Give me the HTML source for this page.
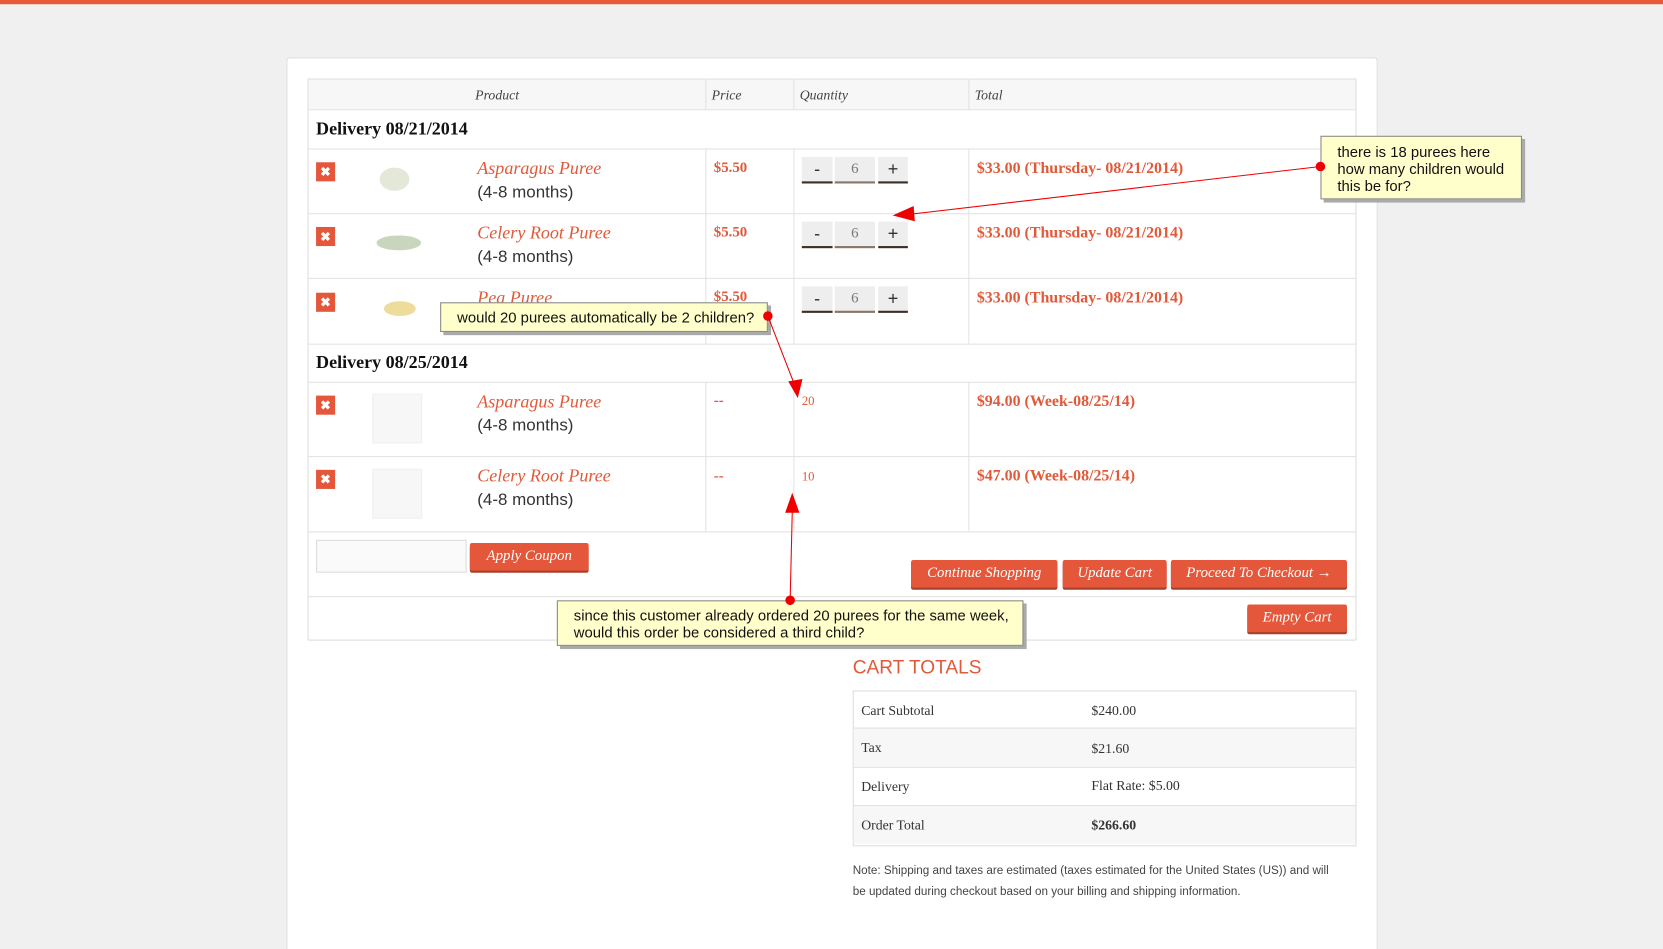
<!DOCTYPE html>
<html><head><meta charset="utf-8"><style>
*{margin:0;padding:0;box-sizing:border-box}
html,body{width:1663px;height:949px;overflow:hidden;background:#efefef}
#w{position:absolute;left:0;top:0;width:1568px;height:895px;transform:scale(1.0606);transform-origin:0 0;background:#f0f0f0;font-family:"Liberation Serif",serif;overflow:hidden}
.a{position:absolute}
.sans{font-family:"Liberation Sans",sans-serif}
.red{color:#e05a3a}
.hl{position:absolute;height:1px;background:#e2e2e2}
.vl{position:absolute;width:1px;background:#e2e2e2}
.x{position:absolute;width:18px;height:18px;background:#e5573a;color:#fff;font:bold 12px/18px "Liberation Sans",sans-serif;text-align:center}
.nm{position:absolute;left:450px;font:italic 17px "Liberation Serif",serif;color:#e05a3a}
.mo{position:absolute;left:450px;font:16px "Liberation Sans",sans-serif;color:#333}
.pr{position:absolute;left:673px;font:bold 14px "Liberation Serif",serif;color:#e05a3a}
.tt{position:absolute;left:921px;font:bold 15px "Liberation Serif",serif;color:#e05a3a}
.qb{position:absolute;height:25px;background:#eee;border-bottom:2px solid #3a302a;text-align:center;font:17px/23px "Liberation Sans",sans-serif;color:#333}
.btn{position:absolute;background:#e5573a;color:#fff;font:italic 14px/26px "Liberation Serif",serif;text-align:center;border-radius:2px;box-shadow:0 2px 0 #a8412b}
.note{position:absolute;background:#ffffcc;border:1px solid #888;box-shadow:3px 3px 0 #aaa;font:14px/16px "Liberation Sans",sans-serif;color:#111}
.img{position:absolute;width:47px;height:47px;background:#f7f7f7;border:1px solid #f0f0f0}
</style></head><body><div id="w">
<div class="a" style="left:0;top:0;width:1568px;height:4px;background:#e8593a"></div>
<div class="a" style="left:270px;top:54px;width:1029px;height:841px;background:#fff;border:1px solid #ddd;border-bottom:none;border-radius:3px 3px 0 0"></div>
<div class="a" style="left:290px;top:74px;width:989px;height:530px;border:1px solid #ddd"></div>
<div class="a" style="left:291px;top:75px;width:987px;height:28px;background:#f7f7f7"></div>
<div class="hl" style="left:290px;top:103px;width:989px"></div>
<div class="hl" style="left:290px;top:140px;width:989px"></div>
<div class="hl" style="left:290px;top:201px;width:989px"></div>
<div class="hl" style="left:290px;top:262px;width:989px"></div>
<div class="hl" style="left:290px;top:324px;width:989px"></div>
<div class="hl" style="left:290px;top:360px;width:989px"></div>
<div class="hl" style="left:290px;top:430px;width:989px"></div>
<div class="hl" style="left:290px;top:501px;width:989px"></div>
<div class="hl" style="left:290px;top:562px;width:989px"></div>
<div class="vl" style="left:665px;top:74px;height:29px"></div><div class="vl" style="left:748px;top:74px;height:29px"></div><div class="vl" style="left:913px;top:74px;height:29px"></div>
<div class="vl" style="left:665px;top:140px;height:184px"></div><div class="vl" style="left:748px;top:140px;height:184px"></div><div class="vl" style="left:913px;top:140px;height:184px"></div>
<div class="vl" style="left:665px;top:360px;height:141px"></div><div class="vl" style="left:748px;top:360px;height:141px"></div><div class="vl" style="left:913px;top:360px;height:141px"></div>
<div class="a" style="left:448px;top:82px;font:italic 13px 'Liberation Serif',serif;color:#444">Product</div>
<div class="a" style="left:671px;top:82px;font:italic 13px 'Liberation Serif',serif;color:#444">Price</div>
<div class="a" style="left:754px;top:82px;font:italic 13px 'Liberation Serif',serif;color:#444">Quantity</div>
<div class="a" style="left:919px;top:82px;font:italic 13px 'Liberation Serif',serif;color:#444">Total</div>
<div class="a" style="left:298px;top:112px;font:bold 17px 'Liberation Serif',serif;color:#111">Delivery 08/21/2014</div>
<div class="a" style="left:298px;top:332px;font:bold 17px 'Liberation Serif',serif;color:#111">Delivery 08/25/2014</div>
<div class="x" style="left:298px;top:153px">✖</div>
<div class="x" style="left:298px;top:214px">✖</div>
<div class="x" style="left:298px;top:276px">✖</div>
<div class="x" style="left:298px;top:373px">✖</div>
<div class="x" style="left:298px;top:443px">✖</div>
<div class="a" style="left:358px;top:158px;width:28px;height:22px;border-radius:50%;background:#e4e8d8"></div>
<div class="a" style="left:355px;top:222px;width:42px;height:14px;border-radius:50%;background:#c9d6bd"></div>
<div class="a" style="left:362px;top:284px;width:30px;height:14px;border-radius:50%;background:#eedc9a"></div>
<div class="img" style="left:351px;top:371px"></div>
<div class="img" style="left:351px;top:442px"></div>
<div class="nm" style="top:149px">Asparagus Puree</div><div class="mo" style="top:173px">(4-8 months)</div>
<div class="nm" style="top:210px">Celery Root Puree</div><div class="mo" style="top:234px">(4-8 months)</div>
<div class="nm" style="top:271px">Pea Puree</div>
<div class="nm" style="top:369px">Asparagus Puree</div><div class="mo" style="top:393px">(4-8 months)</div>
<div class="nm" style="top:439px">Celery Root Puree</div><div class="mo" style="top:463px">(4-8 months)</div>
<div class="pr" style="top:151px">$5.50</div><div class="pr" style="top:212px">$5.50</div><div class="pr" style="top:273px">$5.50</div>
<div class="pr" style="top:371px">--</div><div class="pr" style="top:442px">--</div>
<div class="qb" style="left:756px;top:148px;width:29px">-</div><div class="qb" style="left:787px;top:148px;width:38px;font:14px/23px 'Liberation Serif',serif;color:#777;border-bottom-color:#8a7664">6</div><div class="qb" style="left:828px;top:148px;width:28px">+</div>
<div class="qb" style="left:756px;top:209px;width:29px">-</div><div class="qb" style="left:787px;top:209px;width:38px;font:14px/23px 'Liberation Serif',serif;color:#777;border-bottom-color:#8a7664">6</div><div class="qb" style="left:828px;top:209px;width:28px">+</div>
<div class="qb" style="left:756px;top:270px;width:29px">-</div><div class="qb" style="left:787px;top:270px;width:38px;font:14px/23px 'Liberation Serif',serif;color:#777;border-bottom-color:#8a7664">6</div><div class="qb" style="left:828px;top:270px;width:28px">+</div>
<div class="a red" style="left:756px;top:371px;font:12px 'Liberation Serif',serif">20</div>
<div class="a red" style="left:756px;top:442px;font:12px 'Liberation Serif',serif">10</div>
<div class="tt" style="top:151px">$33.00 (Thursday- 08/21/2014)</div>
<div class="tt" style="top:212px">$33.00 (Thursday- 08/21/2014)</div>
<div class="tt" style="top:273px">$33.00 (Thursday- 08/21/2014)</div>
<div class="tt" style="top:371px">$94.00 (Week-08/25/14)</div>
<div class="tt" style="top:441px">$47.00 (Week-08/25/14)</div>
<div class="a" style="left:298px;top:509px;width:142px;height:31px;border:1px solid #ddd;background:#fafafa"></div>
<div class="btn" style="left:443px;top:512px;width:112px">Apply Coupon</div>
<div class="btn" style="left:859px;top:528px;width:138px">Continue Shopping</div>
<div class="btn" style="left:1002px;top:528px;width:98px">Update Cart</div>
<div class="btn" style="left:1104px;top:528px;width:166px">Proceed To Checkout →</div>
<div class="btn" style="left:1176px;top:570px;width:94px">Empty Cart</div>
<div class="a sans red" style="left:804px;top:619px;font-size:18px">CART TOTALS</div>
<div class="a" style="left:804px;top:651px;width:475px;height:147px;border:1px solid #ddd"></div>
<div class="a" style="left:805px;top:687px;width:473px;height:36px;background:#f7f7f7"></div>
<div class="a" style="left:805px;top:760px;width:473px;height:36px;background:#f7f7f7"></div>
<div class="hl" style="left:804px;top:686px;width:475px"></div><div class="hl" style="left:804px;top:723px;width:475px"></div><div class="hl" style="left:804px;top:759px;width:475px"></div>
<div class="a" style="left:812px;top:662px;font-size:13px;color:#333">Cart Subtotal</div><div class="a" style="left:1029px;top:662px;font-size:13px;color:#333">$240.00</div>
<div class="a" style="left:812px;top:697px;font-size:13px;color:#333">Tax</div><div class="a" style="left:1029px;top:698px;font-size:13px;color:#333">$21.60</div>
<div class="a" style="left:812px;top:734px;font-size:13px;color:#333">Delivery</div><div class="a" style="left:1029px;top:733px;font-size:13px;color:#333">Flat Rate: $5.00</div>
<div class="a" style="left:812px;top:770px;font-size:13px;color:#333">Order Total</div><div class="a" style="left:1029px;top:770px;font-size:13px;font-weight:bold;color:#333">$266.60</div>
<div class="a sans" style="left:804px;top:811px;width:462px;font-size:11px;line-height:20px;color:#444">Note: Shipping and taxes are estimated (taxes estimated for the United States (US)) and will be updated during checkout based on your billing and shipping information.</div>
<div class="note" style="left:1245px;top:128px;width:190px;height:60px;padding:6px 0 0 15px">there is 18 purees here how many children would this be for?</div>
<div class="note" style="left:415px;top:285px;width:309px;height:28px;padding:5px 0 0 15px">would 20 purees automatically be 2 children?</div>
<div class="note" style="left:525px;top:566px;width:440px;height:43px;padding:5px 0 0 15px">since this customer already ordered 20 purees for the same week, would this order be considered a third child?</div>
<svg class="a" style="left:0;top:0" width="1568" height="895">
<g stroke="#e00" stroke-width="1" fill="#e00">
<line x1="1245" y1="157" x2="858" y2="202"/><polygon points="843,203 861,195 862,208"/>
<line x1="724" y1="298" x2="750" y2="365"/><polygon points="752,374 744,360 756,358"/>
<line x1="745" y1="566" x2="747" y2="482"/><polygon points="747,466 753,483 741,483"/>
<circle cx="1245" cy="157" r="4"/><circle cx="724" cy="298" r="4"/><circle cx="745" cy="566" r="4"/>
</g></svg>
</div></body></html>
